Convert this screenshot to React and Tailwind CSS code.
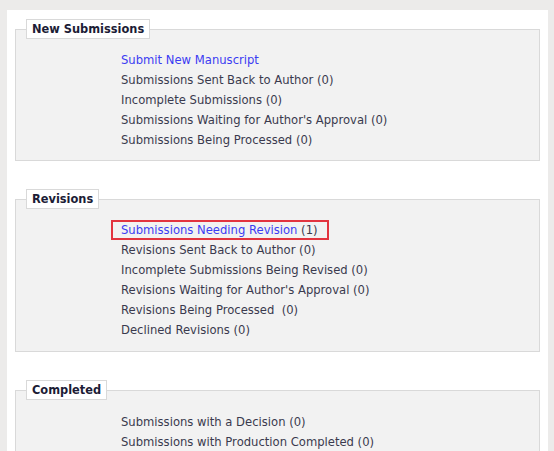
import React from 'react'

const sections = [
  {
    title: 'New Submissions',
    pb: 'pb-[10px]',
    items: [
      { label: 'Submit New Manuscript', link: true },
      { label: 'Submissions Sent Back to Author (0)' },
      { label: 'Incomplete Submissions (0)' },
      { label: "Submissions Waiting for Author's Approval (0)" },
      { label: 'Submissions Being Processed (0)' },
    ],
  },
  {
    title: 'Revisions',
    pb: 'pb-[11px]',
    items: [
      { label: 'Submissions Needing Revision', count: '(1)', link: true, marked: true },
      { label: 'Revisions Sent Back to Author (0)' },
      { label: 'Incomplete Submissions Being Revised (0)' },
      { label: "Revisions Waiting for Author's Approval (0)" },
      { label: 'Revisions Being Processed  (0)' },
      { label: 'Declined Revisions (0)' },
    ],
  },
  {
    title: 'Completed',
    pb: 'pb-[10px]',
    items: [
      { label: 'Submissions with a Decision (0)' },
      { label: 'Submissions with Production Completed (0)' },
    ],
  },
]

function Item({ item }){
  if (item.marked) {
    return (
      <div className="h-[20px] leading-[20px]">
        <span className="inline-block -ml-[10px] h-[20px] pl-[8px] pr-[9px] border-2 border-[#e2343f] leading-[16px]">
          <a href="#" className="text-[#3c3cf2]">{item.label}</a> {item.count}
        </span>
      </div>
    )
  }
  return (
    <div className="h-[20px] leading-[20px] whitespace-pre">
      {item.link ? <a href="#" className="text-[#3c3cf2]">{item.label}</a> : item.label}
    </div>
  )
}

export default function App(){
  return (
    <div className="h-[451px] overflow-hidden bg-[#ecebea] pt-[10px] pl-[7px] pr-[6px] font-['DejaVu_Sans',Verdana,sans-serif] text-[11.6px] text-[#3a3a4e]">
      <div className="bg-white h-full px-[8px] pt-[9px]">
        {sections.map((s, i) => (
          <fieldset key={s.title} className={`border border-[#d9d9d9] bg-[#f2f2f2] pl-[10px] pr-[10px] ${s.pb} ${i > 0 ? 'mt-[28px]' : ''}`}>
            <legend className="bg-white border border-[#d9d9d9] px-[5px] h-[20px] leading-[18px] font-bold text-[11.4px] text-[#1c1c36]">{s.title}</legend>
            <div className={`pl-[95px] ${i === 2 ? 'pt-[12px]' : 'pt-[11px]'}`}>
              {s.items.map(it => <Item key={it.label} item={it} />)}
            </div>
          </fieldset>
        ))}
      </div>
    </div>
  )
}
